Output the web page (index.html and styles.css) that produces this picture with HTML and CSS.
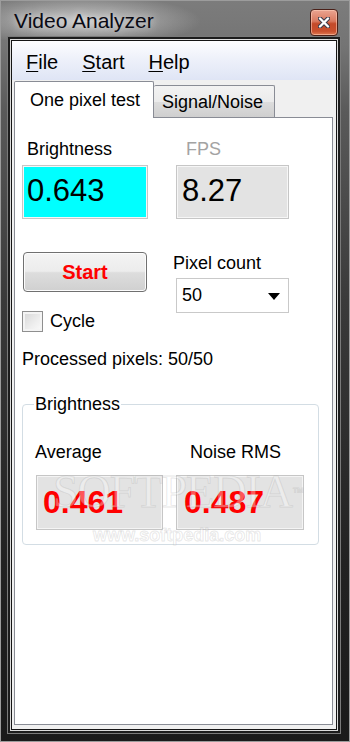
FILE: index.html
```html
<!DOCTYPE html>
<html>
<head>
<meta charset="utf-8">
<title>Video Analyzer</title>
<link rel="stylesheet" href="styles.css">
</head>
<body>
<div class="window">
  <div class="titlebar">
    <span class="title">Video Analyzer</span>
    <div class="close">
      <svg width="12" height="11" viewBox="0 0 12 11">
        <path d="M2 1.5 L10 9.5 M10 1.5 L2 9.5" stroke="#3b3b4a" stroke-width="4.4" stroke-linecap="round"/>
        <path d="M2 1.5 L10 9.5 M10 1.5 L2 9.5" stroke="#ffffff" stroke-width="2.4" stroke-linecap="round"/>
      </svg>
    </div>
  </div>
  <div class="client">
    <div class="menubar">
      <span class="menu-item"><u>F</u>ile</span>
      <span class="menu-item"><u>S</u>tart</span>
      <span class="menu-item"><u>H</u>elp</span>
    </div>
    <div class="tabs">
      <div class="tab tab-active">One pixel test</div>
      <div class="tab tab-inactive">Signal/Noise</div>
    </div>
    <div class="panel">
      <div class="grid-top">
        <div class="label label-bright">Brightness</div>
        <div class="label label-fps">FPS</div>
        <div class="valbox valbox-cyan">0.643</div>
        <div class="valbox valbox-gray">8.27</div>
      </div>
      <div class="grid-mid">
        <div class="col-left">
          <div class="btn">Start</div>
          <div class="check-row">
            <span class="checkbox"></span>
            <span class="check-label">Cycle</span>
          </div>
        </div>
        <div class="col-right">
          <div class="label label-pc">Pixel count</div>
          <div class="combo">
            <span class="combo-text">50</span>
            <span class="combo-arrow"></span>
          </div>
        </div>
      </div>
      <div class="processed">Processed pixels: 50/50</div>
      <fieldset class="group">
        <legend class="group-legend">Brightness</legend>
        <div class="grid-group">
          <div class="label label-avg">Average</div>
          <div class="label label-noise">Noise RMS</div>
          <div class="valbox2">0.461</div>
          <div class="valbox2 valbox2-b">0.487</div>
        </div>
      </fieldset>
      <div class="wm wm-big">SOFTPEDIA<span class="wm-tm">™</span></div>
      <div class="wm wm-small">www.softpedia.com</div>
    </div>
  </div>
</div>
</body>
</html>
```
FILE: styles.css
```css
html, body {
  margin: 0;
  padding: 0;
  background: #1c1c1c;
}
.window {
  width: 350px;
  height: 742px;
  box-sizing: border-box;
  border: 1px solid #9c9c9c;
  background: linear-gradient(to bottom, #7c7c7c 0px, #747474 45px, #5a5a5a 110px, #3a3a3a 300px, #222222 560px, #1a1a1a 100%);
  display: flex;
  flex-direction: column;
  padding-bottom: 11px;
  font-family: "Liberation Sans", Arial, sans-serif;
  color: #000;
}
.titlebar {
  height: 39px;
  display: flex;
  justify-content: space-between;
  align-items: center;
  padding: 0 11px 0 13px;
  background: radial-gradient(ellipse 120px 26px at 80px 20px, rgba(225,225,225,0.75), rgba(200,200,200,0) 100%);
}
.title {
  font-size: 21px;
  line-height: 24px;
  color: #0a0a14;
  text-shadow: 0 0 8px rgba(255,255,255,0.8);
}
.close {
  align-self: flex-start;
  margin-top: 8px;
  width: 28px;
  height: 27px;
  box-sizing: border-box;
  border: 1px solid #4a2018;
  border-radius: 4px;
  background: linear-gradient(to bottom, #eaa491 0%, #d9795f 45%, #c44a2a 55%, #c9502e 85%, #e07a52 100%);
  box-shadow: inset 0 0 0 1px rgba(255,210,190,0.55);
  display: flex;
  align-items: center;
  justify-content: center;
}
.close svg {
  display: block;
}
.client {
  flex: 1;
  margin: 0 12px 0 10px;
  border: 1px solid #151515;
  background: #f0f0f0;
  box-shadow: 0 0 0 1px #dcdcdc, 0 0 0 3px #1c1c1c, 0 0 0 4px #7a7a7a;
  display: flex;
  flex-direction: column;
  padding-bottom: 4px;
}
.menubar {
  height: 39px;
  box-sizing: border-box;
  display: flex;
  align-items: center;
  padding: 3px 0 0 2px;
  background: linear-gradient(to bottom, #fdfdff 0%, #eef1fa 45%, #dfe5f5 100%);
}
.menu-item {
  font-size: 20px;
  line-height: 24px;
  padding: 0 12px;
  color: #000;
}
.menu-item u {
  text-decoration-thickness: 1px;
  text-underline-offset: 2px;
}
.tabs {
  display: flex;
  align-items: flex-end;
  padding: 1px 0 0 2px;
  height: 37px;
  box-sizing: border-box;
}
.tab {
  box-sizing: border-box;
  font-size: 18px;
  line-height: 22px;
  border: 1px solid #898c95;
  border-bottom: none;
  border-radius: 2px 2px 0 0;
}
.tab-active {
  width: 140px;
  height: 37px;
  padding: 7px 0 0 15px;
  background: #ffffff;
  margin-bottom: -1px;
  position: relative;
  z-index: 1;
}
.tab-inactive {
  width: 121px;
  height: 32px;
  padding: 5px 0 0 8px;
  background: linear-gradient(to bottom, #f3f3f3 0%, #ebebeb 50%, #dddddd 51%, #cfcfcf 100%);
  border-left: none;
}
.panel {
  flex: 1;
  margin: 0 3px 0 2px;
  border: 1px solid #898c95;
  background: #ffffff;
  padding: 20px 0 0 7px;
  position: relative;
}
.label {
  font-size: 18px;
  line-height: 22px;
}
.grid-top {
  display: grid;
  grid-template-columns: 126px 113px;
  column-gap: 28px;
  row-gap: 5px;
}
.label-bright {
  padding-left: 5px;
}
.label-fps {
  padding-left: 10px;
  color: #a3a3a3;
}
.valbox {
  height: 54px;
  box-sizing: border-box;
  border: 1px solid #c6c6c6;
  box-shadow: inset 0 0 0 1px #f6f6f6;
  display: flex;
  align-items: center;
  font-size: 31px;
  padding-bottom: 3px;
}
.valbox-cyan {
  background: #00ffff;
  padding-left: 4px;
}
.valbox-gray {
  background: #e3e3e3;
  padding-left: 5px;
}
.grid-mid {
  display: grid;
  grid-template-columns: 126px 113px;
  column-gap: 28px;
  margin-top: 33px;
}
.col-left {
  display: flex;
  flex-direction: column;
}
.btn {
  margin-left: 1px;
  width: 124px;
  height: 40px;
  box-sizing: border-box;
  border: 1px solid #707070;
  border-radius: 4px;
  background: linear-gradient(to bottom, #f4f4f4 0%, #ececec 48%, #dddddd 52%, #d0d0d0 100%);
  box-shadow: inset 0 0 0 1px #fcfcfc;
  display: flex;
  align-items: center;
  justify-content: center;
  color: #ff0000;
  font-weight: bold;
  font-size: 20px;
}
.check-row {
  display: flex;
  align-items: center;
  margin-top: 18px;
  gap: 7px;
}
.checkbox {
  width: 21px;
  height: 21px;
  box-sizing: border-box;
  border: 1px solid #8f8f8f;
  background: linear-gradient(135deg, #d6d6d6 0%, #eeeeee 60%, #fbfbfb 100%);
  box-shadow: inset 0 0 0 2px #f4f4f4;
}
.check-label {
  font-size: 18px;
  line-height: 22px;
}
.col-right {
  display: flex;
  flex-direction: column;
}
.label-pc {
  margin-left: -3px;
}
.combo {
  margin-top: 4px;
  height: 35px;
  box-sizing: border-box;
  border: 1px solid #c9c9c9;
  background: #ffffff;
  display: flex;
  align-items: center;
  justify-content: space-between;
  padding: 0 8px 0 5px;
}
.combo-text {
  font-size: 18px;
}
.combo-arrow {
  width: 0;
  height: 0;
  border-left: 6.5px solid transparent;
  border-right: 6.5px solid transparent;
  border-top: 7px solid #000;
  margin-top: 1px;
}
.processed {
  font-size: 18px;
  line-height: 22px;
  margin-top: 16px;
}
.group {
  margin: 23px 0 0 0;
  width: 297px;
  box-sizing: border-box;
  border: 1px solid #d3dde4;
  border-radius: 4px;
  padding: 0 14px 14px 13px;
  min-width: 0;
}
.group-legend {
  font-size: 18px;
  line-height: 22px;
  padding: 0 1px;
  margin-left: -2px;
}
.grid-group {
  display: grid;
  grid-template-columns: 127px 128px;
  column-gap: 13px;
  row-gap: 12px;
  margin-top: 26px;
}
.label-avg {
  margin-left: -1px;
}
.label-noise {
  padding-left: 14px;
}
.valbox2 {
  height: 55px;
  box-sizing: border-box;
  border: 1px solid #c6c6c6;
  box-shadow: inset 0 0 0 1px #f4f4f4;
  background: #e3e3e3;
  display: flex;
  align-items: center;
  padding-left: 6px;
  color: #ff0000;
  font-weight: bold;
  font-size: 32px;
}
.valbox2-b {
  padding-left: 7px;
}
.wm {
  position: absolute;
  pointer-events: none;
  color: rgba(255,255,255,0.35);
  -webkit-text-stroke: 1px rgba(150,150,150,0.22);
}
.wm-big {
  left: 38px;
  top: 351px;
  font-family: "Liberation Serif", serif;
  font-size: 46px;
  line-height: 46px;
  letter-spacing: -1px;
}
.wm-tm {
  font-size: 12px;
  vertical-align: top;
  font-family: "Liberation Sans", sans-serif;
}
.wm-small {
  left: 78px;
  top: 406px;
  font-family: "Liberation Sans", sans-serif;
  font-weight: bold;
  font-size: 18px;
  line-height: 22px;
}
```
